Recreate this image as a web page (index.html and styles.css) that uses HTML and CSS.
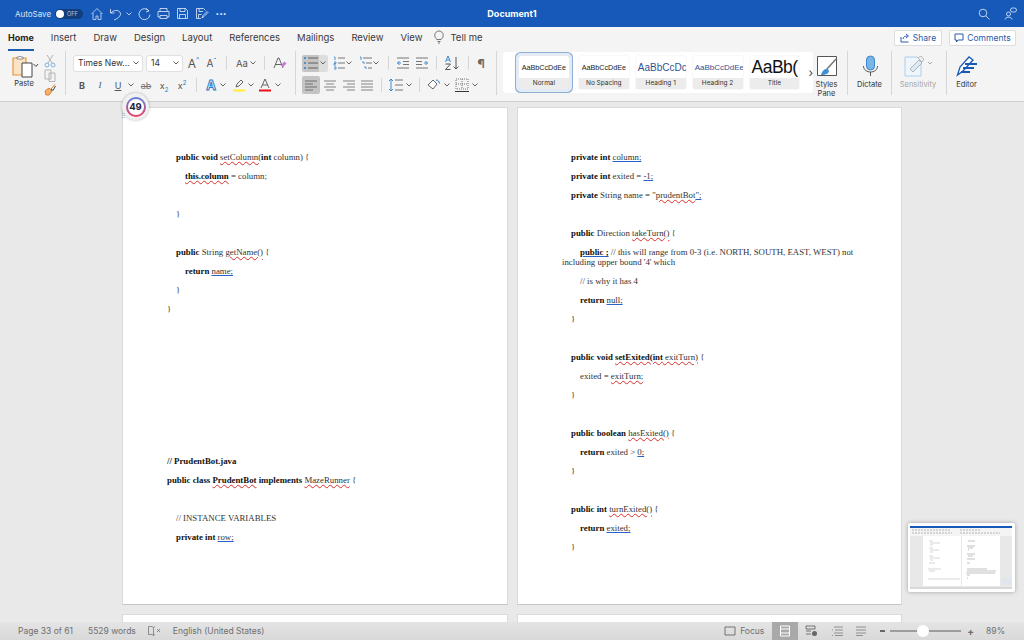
FILE: index.html
```html
<!DOCTYPE html>
<html lang="en">

<head>
  <meta charset="UTF-8" />
  <title>Document1</title>
  <link rel="stylesheet" href="styles.css">
</head>

<body>
  <svg class="defs" width="0" height="0">
    <symbol id="chev" viewBox="0 0 8 8"><path d="M1.500 2.500 4 5l2.500-2.500" fill="none" stroke="#555" stroke-width=".9"/></symbol>
    <symbol id="align-left" viewBox="0 0 18 18"><path d="M3 5h12M3 8h8M3 11h12M3 14h8" stroke="#666" fill="none" stroke-width=".9"/></symbol>
    <symbol id="align-center" viewBox="0 0 18 18"><path d="M3 5h12M5 8h8M3 11h12M5 14h8" stroke="#777" fill="none" stroke-width=".9"/></symbol>
    <symbol id="align-right" viewBox="0 0 18 18"><path d="M3 5h12M7 8h8M3 11h12M7 14h8" stroke="#777" fill="none" stroke-width=".9"/></symbol>
    <symbol id="align-just" viewBox="0 0 18 18"><path d="M3 5h12M3 8h12M3 11h12M3 14h12" stroke="#777" fill="none" stroke-width=".9"/></symbol>
  </svg>

  <header class="titlebar">
    <span class="autosave">AutoSave</span>
    <span class="toggle"><i></i>OFF</span>
    <svg class="tb-home" width="14" height="14" viewBox="0 0 14 14"><path d="M1.500 7 7 1.500 12.500 7M3 6v6.500h3V9h2v3.500h3V6" fill="none" stroke="#cfe0f5" stroke-width=".8"/></svg>
    <svg class="tb-undo" width="14" height="14" viewBox="0 0 14 14"><path d="M1.500 2v4h4M2 6c3-4 10-3 9.500 1.500C11 10 8 12 5 13" fill="none" stroke="#e6eefa" stroke-width=".8"/></svg>
    <svg class="tb-chev" width="8" height="8"><path d="M1.500 2.500 4 5l2.500-2.500" fill="none" stroke="#e6eefa" stroke-width=".8"/></svg>
    <svg class="tb-redo" width="13" height="14" viewBox="0 0 13 14"><path d="M11 4a5.500 5.500 0 1 0 1 3.500M8 1.500 11 4 8 5" fill="none" stroke="#e6eefa" stroke-width=".8"/></svg>
    <svg class="tb-icon" width="13" height="13" viewBox="0 0 13 13"><path d="M3 4V1.500h7V4M3 10H1V4.500h11V10h-2M3 8.500h7v3H3z" fill="none" stroke="#e6eefa" stroke-width=".8"/></svg>
    <svg class="tb-icon" width="13" height="13" viewBox="0 0 13 13"><path d="M1.500 1.500h8l2 2v8h-10zM4 1.500v3h5v-3M3.500 11.500V7.500h6v4" fill="none" stroke="#e6eefa" stroke-width=".8"/></svg>
    <svg class="tb-icon" width="14" height="13" viewBox="0 0 14 13"><path d="M6 11.500H1.500v-10h7l2 2M4 1.500v3h4M3.500 11V7.500h3M7 11l1-2.500 4-4 1 1-4 4z" fill="none" stroke="#e6eefa" stroke-width=".8"/></svg>
    <span class="tb-dots">···</span>
    <span class="doc-title">Document1</span>
    <svg class="tb-search" width="12" height="12" viewBox="0 0 12 12"><circle cx="5" cy="5" r="3.800" fill="none" stroke="#e6eefa" stroke-width=".8"/><path d="m8 8 3.500 3.500" stroke="#e6eefa" stroke-width=".8"/></svg>
    <svg class="tb-people" width="13" height="13" viewBox="0 0 13 13"><circle cx="4.500" cy="7" r="2" fill="none" stroke="#e6eefa" stroke-width=".8"/><path d="M1 12.500c0-3 7-3 7 0" fill="none" stroke="#e6eefa" stroke-width=".8"/><rect x="6.500" y="1" width="6" height="4" rx="2" fill="none" stroke="#e6eefa" stroke-width=".8"/></svg>
  </header>

  <nav class="tabs">
    <span class="tab active">Home</span>
    <span class="tab">Insert</span>
    <span class="tab">Draw</span>
    <span class="tab">Design</span>
    <span class="tab">Layout</span>
    <span class="tab">References</span>
    <span class="tab">Mailings</span>
    <span class="tab">Review</span>
    <span class="tab">View</span>
    <svg class="bulb" width="10" height="14" viewBox="0 0 10 14"><path d="M3 9.500C1 8 .8 6.500.8 5.200a4.200 4.200 0 0 1 8.400 0C9.200 6.500 9 8 7 9.500zM3.500 11.500h3M4 13h2" fill="none" stroke="#555" stroke-width=".8"/></svg>
    <span class="tab tell">Tell me</span>
    <span class="top-btn share">
      <svg width="10" height="10" viewBox="0 0 10 10"><path d="M1 4v5h7.500M3 6c0-2 2-3 4-3M6 1l2.500 2L6 5" fill="none" stroke="#2b5aa8"/></svg>Share
    </span>
    <span class="top-btn comments">
      <svg width="10" height="10" viewBox="0 0 10 10"><path d="M1 1h8v6H4L2.500 9V7H1z" fill="none" stroke="#2b5aa8"/></svg>Comments
    </span>
  </nav>

  <section class="ribbon">
    <div class="group paste-group">
      <div class="paste">
        <svg width="27" height="23" viewBox="0 0 27 23">
          <path d="M1 3h13v17H1z" fill="#fbe3c8" stroke="#e8963c" stroke-width="1.200"/>
          <path d="M5 4V2h2l1-1 1 1h2v2z" fill="#fff" stroke="#777" stroke-width=".8"/>
          <path d="M10 8h10v14H10z" fill="#fff" stroke="#444"/>
          <path d="M22.500 9 25 11.500 27 9" fill="none" stroke="#444" transform="translate(-1 0)"/>
        </svg>
        <span>Paste</span>
      </div>
      <div class="clip">
        <svg width="12" height="14" viewBox="0 0 12 14"><path d="m3 1 5 8M9 1 4 9" stroke="#b5b5b5" fill="none"/><circle cx="3" cy="11" r="2" fill="none" stroke="#7fb2de"/><circle cx="9" cy="11" r="2" fill="none" stroke="#7fb2de"/></svg>
        <svg width="12" height="13" viewBox="0 0 12 13"><path d="M1 1h6v9H1zM5 4h6v8.500H5z" fill="#f3f3f3" stroke="#b5b5b5"/></svg>
        <svg width="12" height="13" viewBox="0 0 12 13"><path d="M7 6 11 1.500M1 8l4-3 3 3-3 4H2z" fill="#f6b26b" stroke="#d9822b"/><path d="M7 6l2 1.500L11.500 3" fill="none" stroke="#444"/></svg>
      </div>
    </div>

    <div class="group font-group">
      <div class="row">
        <span class="select font-name">Times New...<svg width="8" height="8"><use href="#chev"/></svg></span>
        <span class="select font-size ml3">14<svg width="8" height="8"><use href="#chev"/></svg></span>
        <span class="glyph big ml3">A<sup>^</sup></span>
        <span class="glyph mid ml3">A<sup>ˇ</sup></span>
        <i class="sep ml7"></i>
        <span class="glyph case ml8">Aa</span><svg class="chev" width="8" height="8"><use href="#chev"/></svg>
        <i class="sep ml7"></i>
        <svg class="ml8" width="14" height="14" viewBox="0 0 14 14"><path d="M1 12 5 2h1l4 10M2.500 8.500h6" fill="none" stroke="#555" stroke-width=".9"/><path d="m8 9 3.500-3.500 2 2L10 11z" fill="#c678d6"/></svg>
      </div>
      <div class="row second">
        <span class="fmt bold">B</span>
        <span class="fmt ital">I</span>
        <span class="fmt und">U</span><svg class="chev" width="8" height="8"><use href="#chev"/></svg>
        <span class="fmt strike ml2">ab</span>
        <span class="fmt script">x<sub>2</sub></span>
        <span class="fmt script">x<sup>2</sup></span>
        <i class="sep ml5"></i>
        <span class="fmt a-fx ml6">A</span><svg class="chev" width="8" height="8"><use href="#chev"/></svg>
        <svg class="ml4" width="16" height="16" viewBox="0 0 16 16"><path d="m5 10 1-3 4-4 2 2-4 4z" fill="none" stroke="#555" stroke-width=".9"/><path d="M2 12.500h12v2H2z" fill="#ffee33"/></svg><svg class="chev" width="8" height="8"><use href="#chev"/></svg>
        <svg class="ml2" width="16" height="16" viewBox="0 0 16 16"><path d="M4 11 8 2l4 9M5.500 8h5" fill="none" stroke="#555" stroke-width=".9"/><path d="M2 12.500h12v2H2z" fill="#e8101a"/></svg><svg class="chev ml1" width="8" height="8"><use href="#chev"/></svg>
      </div>
    </div>

    <div class="group para-group">
      <div class="row">
        <span class="btn-on bullets">
          <svg width="16" height="14" viewBox="0 0 16 14"><path d="M1 2h2M1 7h2M1 12h2" stroke="#2a7fc9" stroke-width="1.500"/><path d="M5 2h10M5 7h10M5 12h10" stroke="#555" stroke-width=".9"/></svg>
          <svg width="8" height="8"><use href="#chev"/></svg>
        </span>
        <svg class="ml5" width="12" height="14" viewBox="0 0 12 14"><path d="M1 1h1v3M1 6h2v1.500H1V9h2M1 11h2v2H1" stroke="#2a7fc9" fill="none" stroke-width=".8"/><path d="M5 2h7M5 7h7M5 12h7" stroke="#666" stroke-width=".9"/></svg><svg class="chev" width="8" height="8"><use href="#chev"/></svg>
        <svg class="ml6" width="13" height="14" viewBox="0 0 13 14"><path d="M1 1h1v3M3 6h2v2M5 11h2v2" stroke="#2a7fc9" fill="none" stroke-width=".8"/><path d="M4 2h9M7 7h6M9 12h4" stroke="#666" stroke-width=".9"/></svg><svg class="chev" width="8" height="8"><use href="#chev"/></svg>
        <i class="sep ml8"></i>
        <svg class="ml7" width="14" height="14" viewBox="0 0 14 14"><path d="M1 2h12M7 5.500h6M7 8.500h6M1 12h12" stroke="#666" stroke-width=".9"/><path d="M5 7H1.500M3.500 5 1.500 7l2 2" stroke="#2a7fc9" fill="none" stroke-width=".9"/></svg>
        <svg class="ml5" width="14" height="14" viewBox="0 0 14 14"><path d="M1 2h12M1 5.500h6M1 8.500h6M1 12h12" stroke="#666" stroke-width=".9"/><path d="M9 7h3.500M10.500 5l2 2-2 2" stroke="#2a7fc9" fill="none" stroke-width=".9"/></svg>
        <i class="sep ml7"></i>
        <svg class="ml7" width="16" height="16" viewBox="0 0 16 16"><path d="M1.500 7 4 1l2.500 6M2.500 5h3" stroke="#2a7fc9" fill="none" stroke-width=".9"/><path d="M1.500 9h5l-5 5.500h5" stroke="#444" fill="none" stroke-width=".9"/><path d="M12 2v12M9.500 11.500 12 14l2.500-2.500" stroke="#444" fill="none" stroke-width=".9"/></svg>
        <i class="sep ml8"></i>
        <span class="pilcrow ml5">¶</span>
      </div>
      <div class="row second">
        <span class="btn-on align"><svg width="18" height="18"><use href="#align-left"/></svg></span>
        <svg class="ml1" width="18" height="18"><use href="#align-center"/></svg>
        <svg class="ml1" width="18" height="18"><use href="#align-right"/></svg>
        <svg width="18" height="18"><use href="#align-just"/></svg>
        <i class="sep ml5"></i>
        <svg class="ml6" width="16" height="16" viewBox="0 0 16 16"><path d="M7 3h8M7 8h8M7 13h8" stroke="#666" stroke-width=".9"/><path d="M3 2v12M1 4l2-2 2 2M1 12l2 2 2-2" stroke="#2a7fc9" fill="none" stroke-width=".9"/></svg><svg class="chev ml1" width="8" height="8"><use href="#chev"/></svg>
        <i class="sep ml6"></i>
        <svg class="ml6" width="16" height="16" viewBox="0 0 16 16"><path d="m2 8 5-5 4 4-4 5z" fill="#fff" stroke="#555" stroke-width=".9"/><path d="M10 3c2 0 3 1 3.500 3.500" stroke="#2a7fc9" fill="none"/></svg><svg class="chev ml1" width="8" height="8"><use href="#chev"/></svg>
        <svg class="ml3" width="16" height="16" viewBox="0 0 16 16"><path d="M2 2h12v10H2zM2 7h12M8 2v10" fill="none" stroke="#777" stroke-dasharray="1 1"/><path d="M1 14.500h14" stroke="#333"/></svg><svg class="chev ml1" width="8" height="8"><use href="#chev"/></svg>
      </div>
    </div>

    <div class="gallery">
      <div class="style-card selected"><span class="preview sample">AaBbCcDdEe</span><span class="caption">Normal</span></div>
      <div class="style-card"><span class="preview sample">AaBbCcDdEe</span><span class="caption">No Spacing</span></div>
      <div class="style-card"><span class="preview h1">AaBbCcDc</span><span class="caption">Heading 1</span></div>
      <div class="style-card"><span class="preview h2">AaBbCcDdEe</span><span class="caption">Heading 2</span></div>
      <div class="style-card"><span class="preview title">AaBb(</span><span class="caption">Title</span></div>
      <span class="more">›</span>
    </div>

    <div class="tool styles-pane">
      <svg width="22" height="22" viewBox="0 0 22 22"><path d="M1.500 1.500h19v19h-19z" fill="#fff" stroke="#555"/><path d="M20 4 11 14" stroke="#777" stroke-width="1.500"/><path d="M5 20c1-4 3-6 6-6.500l2 2c0 3-3 4.500-8 4.500z" fill="#3f8fd2"/></svg>
      <span>Styles<br>Pane</span>
    </div>
    <div class="tool dictate">
      <svg width="16" height="22" viewBox="0 0 16 22"><rect x="4.500" y="1" width="8" height="14" rx="4" fill="#79b6e8" stroke="#3a86c8"/><path d="M1.500 11c0 8 14 8 14 0M8.500 17v4" fill="none" stroke="#555"/></svg>
      <span>Dictate</span>
    </div>
    <div class="tool sensitivity">
      <svg width="30" height="22" viewBox="0 0 30 22"><path d="M2 2h12l4 3v16H2z" fill="#eef5fb" stroke="#a9d0ee"/><path d="m7 14 9-9 3 3-9 9z" fill="#dfe9f1" stroke="#aab7c2"/><path d="m15 3 3-2 3 3-2 3z" fill="#eee" stroke="#bbb"/><path d="m25 7 2 2 2-2" fill="none" stroke="#aaa"/></svg>
      <span>Sensitivity</span>
    </div>
    <div class="tool editor">
      <svg width="22" height="22" viewBox="0 0 22 22"><path d="M1.500 20 4 12 13 2l4 3-10 11z" fill="#fff" stroke="#1659b8" stroke-width="1.300"/><path d="M9 9h12M7 13h11M5 17h9" stroke="#1659b8" stroke-width="2.200"/></svg>
      <span>Editor</span>
    </div>
  </section>

  <main class="canvas">
    <div class="pages">
      <article class="page">
        <p class="in1"><b>public void</b> <u class="sq">setColumn(</u><b>int</b> column) {</p>
        <p class="in2"><b><u class="sq">this.column</u></b> = column;</p>
        <p>&nbsp;</p>
        <p class="in1">}</p>
        <p>&nbsp;</p>
        <p class="in1"><b>public</b> String <u class="sq">getName()</u> {</p>
        <p class="in2"><b>return</b> <u class="gr">name;</u></p>
        <p class="in1">}</p>
        <p>}</p>
        <p>&nbsp;</p>
        <p>&nbsp;</p>
        <p>&nbsp;</p>
        <p>&nbsp;</p>
        <p>&nbsp;</p>
        <p>&nbsp;</p>
        <p>&nbsp;</p>
        <p><b>// PrudentBot.java</b></p>
        <p><b>public class</b> <u class="sq"><b>PrudentBot</b></u> <b>implements</b> <u class="sq">MazeRunner</u> {</p>
        <p>&nbsp;</p>
        <p class="in1">// INSTANCE VARIABLES</p>
        <p class="in1"><b>private int</b> <u class="gr">row;</u></p>
      </article>
      <article class="page">
        <p class="in1"><b>private int</b> <u class="gr">column;</u></p>
        <p class="in1"><b>private int</b> exited = <u class="gr">-1;</u></p>
        <p class="in1"><b>private</b> String name = "<u class="sq">prudentBot</u><u class="gr">";</u></p>
        <p>&nbsp;</p>
        <p class="in1"><b>public</b> Direction <u class="sq">takeTurn()</u> {</p>
        <p class="in2-first"><u class="gr"><b>public ;</b></u> // this will range from 0-3 (i.e. NORTH, SOUTH, EAST, WEST) not including upper bound '4' which</p>
        <p class="in2">// is why it has 4</p>
        <p class="in2"><b>return</b> <u class="gr">null;</u></p>
        <p class="in1">}</p>
        <p>&nbsp;</p>
        <p class="in1"><b>public void</b> <u class="sq"><b>setExited(int</b> exitTurn)</u> {</p>
        <p class="in2">exited = <u class="sq">exitTurn;</u></p>
        <p class="in1">}</p>
        <p>&nbsp;</p>
        <p class="in1"><b>public boolean</b> <u class="sq">hasExited()</u> {</p>
        <p class="in2"><b>return</b> exited &gt; <u class="gr">0;</u></p>
        <p class="in1">}</p>
        <p>&nbsp;</p>
        <p class="in1"><b>public int</b> <u class="sq">turnExited()</u> {</p>
        <p class="in2"><b>return</b> <u class="gr">exited;</u></p>
        <p class="in1">}</p>
      </article>
      <div class="page"></div>
      <div class="page"></div>
    </div>

    <svg class="thumb" width="107" height="69" viewBox="0 0 107 69">
      <rect width="107" height="69" rx="2" fill="#fff"/>
      <rect x="2" y="3" width="102" height="63" fill="#e8e8e8"/>
      <rect x="2" y="3" width="102" height="2" fill="#1659b8"/>
      <rect x="2" y="5" width="102" height="8" fill="#f4f4f4"/>
      <path d="M4 7h38M52 7h20M4 10h40M52 10h40" stroke="#b5b5b5" stroke-width="1" stroke-dasharray="2 1"/>
      <rect x="15" y="13" width="38" height="50" fill="#fff"/>
      <rect x="54" y="13" width="38" height="50" fill="#fff"/>
      <path d="M21 18h4M22 20h10M22 22h3M21 25h4M22 27h9M22 29h3M21 33h4M22 35h10M22 37h3M21 40h6M20 46h13M21 48h6M20 56h32" stroke="#c4c4c4" stroke-width=".7"/>
      <path d="M60 18h7M59 23h8M60 25h5M60 27h1M59 31h8M60 33h5M59 36h8M59 40h3M59 46h20M59 48h29M58 50h29M59 52h3M59 55h1" stroke="#a8a8a8" stroke-width=".7"/>
      <rect x="93" y="55" width="11" height="7" fill="#dfe6ee"/>
      <rect x="2" y="64" width="102" height="2" fill="#d8d8d8"/>
    </svg>
  </main>

  <footer class="status">
    <span class="st-page">Page 33 of 61</span>
    <span class="st-words">5529 words</span>
    <svg class="st-book" width="13" height="10" viewBox="0 0 13 10"><path d="M.5.500h3.500l1.500 1v8l-1.500-1H.5zM5.500 1.500 7 .500M5.500 9.500 7 8.500M9 3l3 3M12 3 9 6" fill="none" stroke="#777" stroke-width=".8"/></svg>
    <span class="st-lang">English (United States)</span>
    <svg class="st-focus" width="12" height="10" viewBox="0 0 12 10"><path d="M1 1h10v8H1z" fill="none" stroke="#666" stroke-width=".9"/></svg>
    <span class="st-focus-text">Focus</span>
    <span class="view-on"><svg width="12" height="12" viewBox="0 0 12 12"><path d="M1.500 1h9v10h-9zM1.500 4h9M1.500 8h9" fill="none" stroke="#fff"/></svg></span>
    <svg class="st-view" width="13" height="12" viewBox="0 0 13 12"><path d="M1 1h9v3H1zM1 6h5M1 9h5" fill="none" stroke="#666" stroke-width=".9"/><circle cx="9.500" cy="8.500" r="2.500" fill="#666"/></svg>
    <svg class="st-view2" width="12" height="10" viewBox="0 0 12 10"><path d="M3 1h9M1 4h1M4 4h8M3 7h9M1 9.500h1M4 9.500h8" stroke="#888" fill="none" stroke-width=".9"/></svg>
    <svg class="st-view3" width="12" height="10" viewBox="0 0 12 10"><path d="M1 1h10M1 4h10M1 7h10M1 9.500h7" stroke="#888" fill="none" stroke-width=".9"/></svg>
    <i class="zoom-minus"></i>
    <span class="slider"><i></i></span>
    <span class="zoom-plus">+</span>
    <span class="st-zoom">89%</span>
  </footer>

  <div class="badge"><span>49</span></div>
  <span class="badge-grip">⠿</span>
</body>

</html>
```

FILE: styles.css
```css
* {
  box-sizing: border-box;
}

html,
body {
  margin: 0;
  height: 640px;
  overflow: hidden;
}

body {
  position: relative;
  display: flex;
  flex-direction: column;
  width: 1024px;
  font-family: Inter, "Liberation Sans", sans-serif;
  color: #333333;
  background-color: #e9e9e9;
}

svg {
  display: block;
  flex-shrink: 0;
}

.defs {
  position: absolute;
}

/* spacing helpers for the toolbars */
.ml1 { margin-left: 1px; }
.ml2 { margin-left: 2px; }
.ml3 { margin-left: 3px; }
.ml4 { margin-left: 4px; }
.ml5 { margin-left: 5px; }
.ml6 { margin-left: 6px; }
.ml7 { margin-left: 7px; }
.ml8 { margin-left: 8px; }

/* Title bar */
.titlebar {
  display: flex;
  align-items: center;
  height: 27px;
  flex-shrink: 0;
  padding-left: 15px;
  color: #ffffff;
  background-color: #1659b8;
}

.autosave {
  width: 40px;
  font-size: 8px;
  color: #dbe7f6;
}

.toggle {
  display: flex;
  align-items: center;
  width: 28px;
  height: 10px;
  padding-left: 1px;
  border-radius: 5px;
  font-size: 5.500px;
  color: #b9c8dd;
  background-color: #123e7c;
}

.toggle i {
  width: 8px;
  height: 8px;
  margin-right: 3px;
  border-radius: 50%;
  background-color: #ffffff;
}

.tb-home { margin-left: 7px; }
.tb-undo { margin-left: 5px; }
.tb-chev { margin-left: 2px; }
.tb-redo { margin-left: 5px; }
.tb-icon { margin-left: 6px; }

.tb-dots {
  width: 14px;
  margin-left: 5px;
  font-size: 11px;
  font-weight: 700;
  text-align: center;
}

.doc-title {
  position: absolute;
  left: 0;
  width: 1024px;
  font-size: 9px;
  font-weight: 700;
  text-align: center;
}

.tb-search { margin-left: auto; }

.tb-people {
  margin-left: 14px;
  margin-right: 7px;
}

/* Tab row */
.tabs {
  display: flex;
  align-items: center;
  height: 24px;
  flex-shrink: 0;
  padding-left: 8px;
  padding-bottom: 4px;
  background-color: #f4f4f4;
}

.tab {
  position: relative;
  margin-right: 17px;
  font-size: 9.500px;
  color: #3a3a3a;
}

.tab.active {
  font-size: 9px;
  font-weight: 700;
  color: #222222;
}

.tab.active::after {
  content: "";
  position: absolute;
  left: 0;
  right: 0;
  bottom: -8px;
  height: 2px;
  background-color: #1a5cae;
}

.tab.tell {
  margin-left: 6px;
  margin-right: 0;
}

.bulb {
  margin-left: -5px;
}

.top-btn {
  display: flex;
  align-items: center;
  gap: 3px;
  height: 16px;
  margin-top: 2px;
  justify-content: center;
  border: 1px solid #dddddd;
  border-radius: 2px;
  font-size: 8.500px;
  color: #2b5aa8;
  background-color: #ffffff;
}

.share {
  width: 48px;
  margin-left: auto;
}

.comments {
  width: 67px;
  margin-left: 7px;
  margin-right: 8px;
}

/* Ribbon */
.ribbon {
  display: flex;
  height: 51px;
  flex-shrink: 0;
  border-bottom: 1px solid #cfcfcf;
  background-color: #f4f4f4;
}

.group {
  height: 44px;
  border-right: 1px solid #d6d6d6;
}

.row {
  display: flex;
  align-items: center;
  height: 18px;
  margin-top: 3px;
}

.row.second {
  margin-top: 4px;
}

.sep {
  width: 1px;
  height: 14px;
  flex-shrink: 0;
  background-color: #d6d6d6;
}

.chev {
  flex-shrink: 0;
}

.paste-group {
  display: flex;
  width: 66px;
  padding-left: 12px;
}

.paste {
  width: 27px;
  padding-top: 4px;
  font-size: 7.500px;
  text-align: center;
}

.paste span {
  display: block;
  width: 20px;
  margin-top: 1px;
  margin-left: 2px;
}

.clip {
  display: flex;
  flex-direction: column;
  gap: 1px;
  margin-top: 3px;
  margin-left: 5px;
}

.font-group {
  width: 230px;
  padding-left: 7px;
}

.select {
  display: flex;
  align-items: center;
  justify-content: space-between;
  height: 17px;
  padding: 0 2px 0 4px;
  border: 1px solid #e0e0e0;
  border-radius: 3px;
  font-size: 8.500px;
  background-color: #ffffff;
}

.font-name { width: 70px; }
.font-size { width: 37px; }

.glyph {
  display: flex;
  justify-content: center;
  width: 15px;
  color: #555555;
}

.glyph sup {
  font-size: 7px;
  line-height: 1;
  color: #2a7fc9;
}

.glyph.big { font-size: 12px; }
.glyph.mid { font-size: 10px; }

.glyph.case {
  width: 14px;
  font-size: 9.500px;
}

.fmt {
  width: 18px;
  font-size: 9px;
  text-align: center;
  color: #555555;
}

.fmt.bold { font-weight: 700; }
.fmt.ital { font-style: italic; font-family: "Liberation Serif", serif; }
.fmt.und { text-decoration: underline; }
.fmt.strike { text-decoration: line-through; color: #777777; }

.fmt.script sub,
.fmt.script sup {
  font-size: 6px;
  line-height: 0;
  color: #2a7fc9;
}

.fmt.a-fx {
  width: 16px;
  font-size: 13px;
  font-weight: 700;
  color: #ffffff;
  -webkit-text-stroke: 1px #2a7fc9;
}

.para-group {
  width: 201px;
  padding-left: 6px;
}

.btn-on {
  display: flex;
  align-items: center;
  border-radius: 2px;
  background-color: #c4c4c4;
}

.bullets {
  width: 26px;
  height: 17px;
  padding-left: 1px;
  background: linear-gradient(90deg, #c4c4c4 0 17px, #dedede 17px);
}

.pilcrow {
  width: 14px;
  font-size: 12px;
  font-weight: 700;
  text-align: center;
  color: #666666;
}

/* Style gallery */
.gallery {
  display: flex;
  align-items: center;
  gap: 7px;
  width: 310px;
  height: 41px;
  margin-top: 1px;
  margin-left: 6px;
  padding-left: 16px;
  border-radius: 3px;
  background-color: #ffffff;
}

.style-card {
  display: flex;
  flex-direction: column;
  width: 50px;
  height: 33px;
  overflow: hidden;
  border-radius: 2px;
  box-shadow: 0 0 1px #bbbbbb;
}

.style-card.selected {
  outline: 3px solid #e3ebf4;
  box-shadow: 0 0 0 4px #8eaed3;
  margin: 0 3px 0 0;
}

.preview {
  display: flex;
  align-items: center;
  justify-content: center;
  height: 22px;
  white-space: nowrap;
  overflow: hidden;
  font-family: "Liberation Sans", sans-serif;
  background-color: #ffffff;
}

.preview.sample { font-size: 7.200px; color: #222222; }
.preview.h1 { font-size: 10px; color: #2f5496; justify-content: flex-start; padding-left: 2px; }
.preview.h2 { font-size: 8px; color: #2f5496; justify-content: flex-start; padding-left: 2px; }
.preview.title { font-size: 17.500px; letter-spacing: -0.5px; color: #111111; justify-content: flex-start; padding-left: 2px; }

.caption {
  height: 11px;
  font-size: 6.500px;
  line-height: 11px;
  text-align: center;
  color: #333333;
  background-color: #ececec;
}

.more {
  margin-left: 2px;
  font-size: 12px;
  color: #444444;
}

.tool {
  display: flex;
  flex-direction: column;
  align-items: center;
  height: 44px;
  padding-top: 4px;
  border-right: 1px solid #d6d6d6;
  font-size: 7.500px;
  line-height: 9px;
  text-align: center;
}

.tool span {
  margin-top: 3px;
}

.styles-pane { width: 35px; padding-right: 7px; }
.dictate { width: 44px; }
.sensitivity { width: 55px; padding-right: 2px; color: #a5a5a5; }
.editor { width: 39px; border-right: 0; }

/* Document canvas */
.canvas {
  flex: 1;
  min-height: 0;
  overflow: hidden;
  padding: 5px 0 0 122px;
  background-color: #e9e9e9;
}

.pages {
  display: grid;
  grid-template-columns: 386px 385px;
  grid-auto-rows: 498px;
  gap: 9px 9px;
}

.page {
  padding: 44px 41px 0 44px;
  border: 1px solid #dadada;
  border-bottom-color: #c6c6c6;
  background-color: #ffffff;
  font-family: "Liberation Serif", serif;
  font-size: 8.800px;
  line-height: 10px;
  color: #333333;
}

.page p {
  margin: 0 0 9px;
}

.page b {
  color: #111111;
}

.page .in1 { padding-left: 9px; }
.page .in2 { padding-left: 18px; }
.page .in2-first { text-indent: 18px; }

.page u {
  text-underline-offset: 1px;
}

u.sq {
  text-decoration: underline wavy #d9302a 1px;
}

u.gr {
  text-decoration: underline solid #2a62cc 1px;
}

.thumb {
  position: absolute;
  left: 908px;
  top: 523px;
  filter: drop-shadow(0 0 2px rgba(0, 0, 0, 0.3));
}

/* Status bar */
.status {
  display: flex;
  align-items: center;
  height: 18px;
  flex-shrink: 0;
  padding-left: 18px;
  font-size: 8.500px;
  color: #6f6f6f;
  background: linear-gradient(#e4e4e4, #d9d9d9);
}

.st-words { margin-left: 15px; }
.st-book { margin-left: 12px; }
.st-lang { margin-left: 12px; }
.st-focus { margin-left: auto; }
.st-focus-text { margin-left: 4px; }

.view-on {
  display: flex;
  align-items: center;
  justify-content: center;
  width: 26px;
  height: 18px;
  margin-left: 8px;
  background-color: #a9a9a9;
}

.st-view { margin-left: 7px; }
.st-view2 { margin-left: 13px; }
.st-view3 { margin-left: 12px; }

.zoom-minus {
  width: 5px;
  height: 2px;
  margin-left: 13px;
  background-color: #666666;
}

.slider {
  position: relative;
  width: 71px;
  height: 2px;
  margin-left: 5px;
  background-color: #9c9c9c;
}

.slider i {
  position: absolute;
  left: 27px;
  top: -5px;
  width: 12px;
  height: 12px;
  border-radius: 50%;
  background-color: #ffffff;
}

.zoom-plus {
  margin-left: 6px;
  font-size: 10px;
  font-weight: 700;
}

.st-zoom {
  margin-left: 12px;
  margin-right: 19px;
}

.badge {
  position: absolute;
  left: 122px;
  top: 93px;
  display: flex;
  align-items: center;
  justify-content: center;
  width: 27px;
  height: 27px;
  border-radius: 50%;
  background-color: #f0f0f0;
  box-shadow: 0 0 3px rgba(0, 0, 0, 0.3);
}

.badge span {
  display: flex;
  align-items: center;
  justify-content: center;
  width: 20px;
  height: 20px;
  border: 2px solid transparent;
  border-radius: 50%;
  font-size: 9.500px;
  font-weight: 700;
  color: #222244;
  background: linear-gradient(#ffffff, #ffffff) padding-box, linear-gradient(#5b7fe0, #ef3f5f) border-box;
}

.badge-grip {
  position: absolute;
  left: 121px;
  top: 112px;
  font-size: 6px;
  line-height: 8px;
  color: #888888;
}
```
